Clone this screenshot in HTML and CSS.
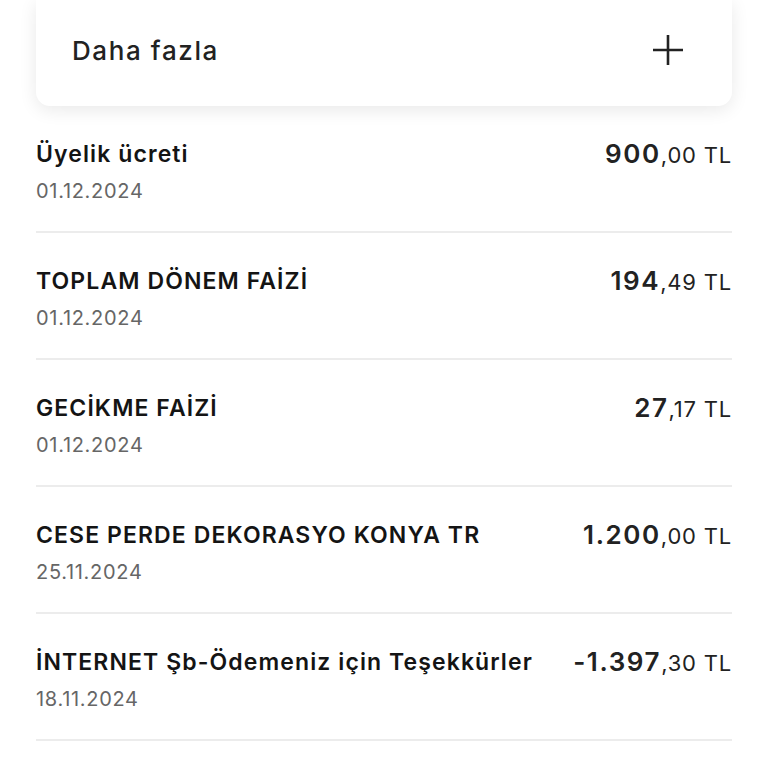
FILE: index.html
```html
<!DOCTYPE html>
<html lang="tr">
<head>
    <meta charset="UTF-8">
    <meta name="viewport" content="width=device-width, initial-scale=1.0">
    <title>Hesap Hareketleri</title>
    <link rel="stylesheet" href="styles.css">
</head>
<body>
    <div class="container">
        <div class="more-card">
            <span class="more-label">Daha fazla</span>
            <svg class="plus-icon" width="32" height="32" viewBox="0 0 32 32">
                <path d="M16 1 V31 M1 16 H31" stroke="#222" stroke-width="2.6" fill="none"/>
            </svg>
        </div>

        <div class="tx-list">
            <div class="tx-item">
                <div class="tx-info">
                    <div class="tx-title">Üyelik ücreti</div>
                    <div class="tx-date">01.12.2024</div>
                </div>
                <div class="tx-amount"><span class="int">900</span>,00 TL</div>
            </div>
            <div class="tx-item">
                <div class="tx-info">
                    <div class="tx-title">TOPLAM DÖNEM FAİZİ</div>
                    <div class="tx-date">01.12.2024</div>
                </div>
                <div class="tx-amount"><span class="int">194</span>,49 TL</div>
            </div>
            <div class="tx-item">
                <div class="tx-info">
                    <div class="tx-title">GECİKME FAİZİ</div>
                    <div class="tx-date">01.12.2024</div>
                </div>
                <div class="tx-amount"><span class="int">27</span>,17 TL</div>
            </div>
            <div class="tx-item">
                <div class="tx-info">
                    <div class="tx-title">CESE PERDE DEKORASYO KONYA TR</div>
                    <div class="tx-date">25.11.2024</div>
                </div>
                <div class="tx-amount"><span class="int">1.200</span>,00 TL</div>
            </div>
            <div class="tx-item">
                <div class="tx-info">
                    <div class="tx-title">İNTERNET Şb-Ödemeniz için Teşekkürler</div>
                    <div class="tx-date">18.11.2024</div>
                </div>
                <div class="tx-amount"><span class="int">-1.397</span>,30 TL</div>
            </div>
        </div>
    </div>
</body>
</html>
```

FILE: styles.css
```css
body {
    font-family: Inter, "Noto Sans", sans-serif;
    background: #fff;
    color: #1c1c1c;
    margin: 0;
    padding: 0;
}

.container {
    padding: 0 36px;
}

.more-card {
    height: 106px;
    box-sizing: border-box;
    padding: 0 48px 6px 36px;
    display: flex;
    justify-content: space-between;
    align-items: center;
    background: #fff;
    border-radius: 0 0 14px 14px;
    box-shadow: 0 4px 18px rgba(0, 0, 0, 0.09);
}

.more-label {
    font-size: 26px;
    font-weight: 500;
    color: #222;
    letter-spacing: 1.6px;
}

.plus-icon {
    display: block;
}

.tx-item {
    height: 127px;
    box-sizing: border-box;
    padding-top: 34px;
    display: flex;
    justify-content: space-between;
    align-items: flex-start;
    border-bottom: 2px solid #ececec;
}

.tx-title {
    font-size: 23px;
    font-weight: 600;
    line-height: 28px;
    color: #141414;
    letter-spacing: 1.1px;
}

.tx-date {
    margin-top: 11px;
    font-size: 20px;
    line-height: 24px;
    color: #666;
    letter-spacing: 0.7px;
}

.tx-amount {
    font-size: 22px;
    line-height: 28px;
    color: #222;
    white-space: nowrap;
    letter-spacing: 0.8px;
}

.tx-amount .int {
    font-size: 26px;
    font-weight: 600;
    letter-spacing: 1.6px;
}
```
